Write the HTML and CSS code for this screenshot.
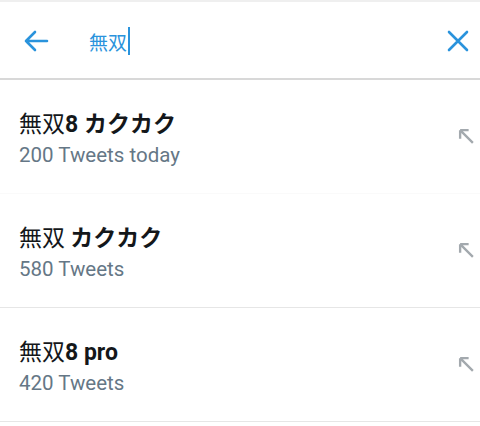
FILE: index.html
```html
<!DOCTYPE html>
<html lang="ja">
<head>
<meta charset="utf-8">
<link rel="stylesheet" href="styles.css">
</head>
<body>
<div class="header">
  <svg class="back" width="26" height="22" viewBox="0 0 26 22"><path d="M24 11H3M12 2L3 11l9 9" fill="none" stroke="currentColor" stroke-width="2.6" stroke-linecap="round" stroke-linejoin="round"/></svg>
  <div class="query">無双<span class="cursor"></span></div>
  <svg class="close" width="22" height="22" viewBox="0 0 22 22"><path d="M2 2l18 18M20 2L2 20" fill="none" stroke="currentColor" stroke-width="2.6" stroke-linecap="round"/></svg>
</div>
<div class="list">
  <div class="row faint">
    <div class="texts">
      <div class="title">無双<b>8 カクカク</b></div>
      <div class="sub">200 Tweets today</div>
    </div>
    <svg class="fill" width="17" height="17" viewBox="0 0 16 16"><path d="M2 2l12 12M2 2h8M2 2v8" fill="none" stroke="currentColor" stroke-width="2.2"/></svg>
  </div>
  <div class="row">
    <div class="texts">
      <div class="title">無双 <b>カクカク</b></div>
      <div class="sub">580 Tweets</div>
    </div>
    <svg class="fill" width="17" height="17" viewBox="0 0 16 16"><path d="M2 2l12 12M2 2h8M2 2v8" fill="none" stroke="currentColor" stroke-width="2.2"/></svg>
  </div>
  <div class="row">
    <div class="texts">
      <div class="title">無双<b>8 pro</b></div>
      <div class="sub">420 Tweets</div>
    </div>
    <svg class="fill" width="17" height="17" viewBox="0 0 16 16"><path d="M2 2l12 12M2 2h8M2 2v8" fill="none" stroke="currentColor" stroke-width="2.2"/></svg>
  </div>
</div>
</body>
</html>
```
FILE: styles.css
```css
html, body {
  margin: 0;
  padding: 0;
  background: #ffffff;
}
body {
  font-family: Roboto, "Noto Sans CJK JP", sans-serif;
  width: 480px;
  height: 426px;
  overflow: hidden;
}
.header {
  height: 76px;
  border-top: 2px solid #efefef;
  border-bottom: 2px solid #d8d8d8;
  display: flex;
  align-items: center;
  color: #2a93dc;
}
.back {
  margin-left: 23px;
  margin-top: 2px;
}
.query {
  margin-left: 40px;
  font-size: 19px;
  font-family: "Noto Sans CJK JP", sans-serif;
  display: flex;
  align-items: center;
  flex: 1;
  margin-top: 2px;
}
.cursor {
  display: inline-block;
  width: 2px;
  height: 28px;
  background: #2a93dc;
  margin-left: 1px;
}
.close {
  margin-right: 11px;
  margin-top: 2px;
}
.row {
  border-bottom: 1px solid #e6e6e6;
  display: flex;
  align-items: center;
  padding-left: 19px;
  padding-right: 5px;
  box-sizing: border-box;
  height: 114px;
}
.row.faint {
  border-bottom-color: #fafafa;
}
.texts {
  flex: 1;
  margin-top: 2px;
}
.title {
  font-size: 23px;
  line-height: 28px;
  color: #14171a;
  font-family: "Noto Sans CJK JP", sans-serif;
}
.title b {
  font-family: Roboto, "Noto Sans CJK JP", sans-serif;
  font-weight: 700;
}
.sub {
  font-size: 20.5px;
  line-height: 26px;
  margin-top: 3px;
  color: #657786;
}
.fill {
  color: #a3a9ae;
}
```
